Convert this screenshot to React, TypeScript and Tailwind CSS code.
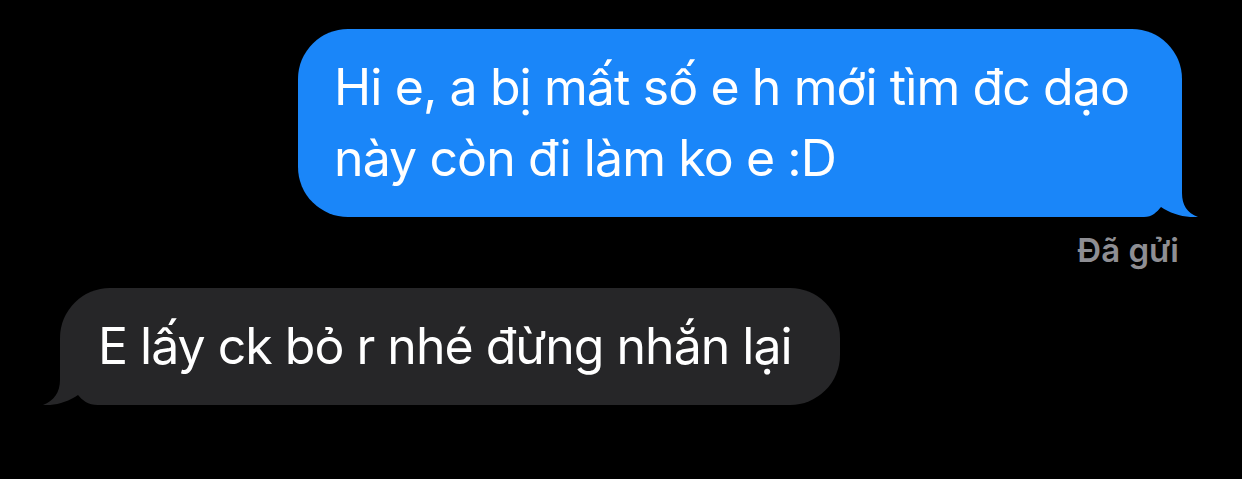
export default function App() {
  return (
    <div
      className="w-[1242px] h-[479px] bg-black flex flex-col pt-[29px] text-white"
      style={{fontFamily: "Inter, 'Noto Sans', sans-serif"}}
    >
      {/* sent message */}
      <div className="relative self-end mr-[60px] w-[884px] bg-[#1a86f9] rounded-[50px] rounded-br-[56px] pl-[36px] pr-[30px] py-[23px]">
        <p className="relative z-10 text-[50px] leading-[71px] tracking-[-0.9px]">
          Hi e, a bị mất số e h mới tìm đc dạo này còn đi làm ko e :D
        </p>
        <svg
          className="absolute bottom-0 right-[-18px]"
          width="80"
          height="67"
          viewBox="0 0 80 67"
        >
          <path
            d="M62 0 L62 43 C62 55 67 63 78 67 C66 68 51 64 41 57 C37 62 32 67 24 67 L0 67 L0 0 Z"
            fill="#1a86f9"
          />
        </svg>
      </div>

      <div className="self-end mr-[63px] mt-[13px] text-[33px] leading-[40px] font-semibold text-[#8e8e93]">
        Đã gửi
      </div>

      {/* received message */}
      <div className="relative self-start ml-[60px] mt-[18px] w-[780px] bg-[#262628] rounded-[50px] rounded-bl-[56px] pl-[38px] pr-[30px] py-[23px]">
        <p className="relative z-10 text-[50px] leading-[71px] tracking-[-1px] whitespace-nowrap">
          E lấy ck bỏ r nhé đừng nhắn lại
        </p>
        <svg
          className="absolute bottom-0 left-[-18px]"
          width="80"
          height="67"
          viewBox="0 0 80 67"
        >
          <path
            d="M18 0 L18 42 C18 54 12 63 1 67 C12 68 26 64 36 57 C40 62 46 67 56 67 L80 67 L80 0 Z"
            fill="#262628"
          />
        </svg>
      </div>
    </div>
  );
}
